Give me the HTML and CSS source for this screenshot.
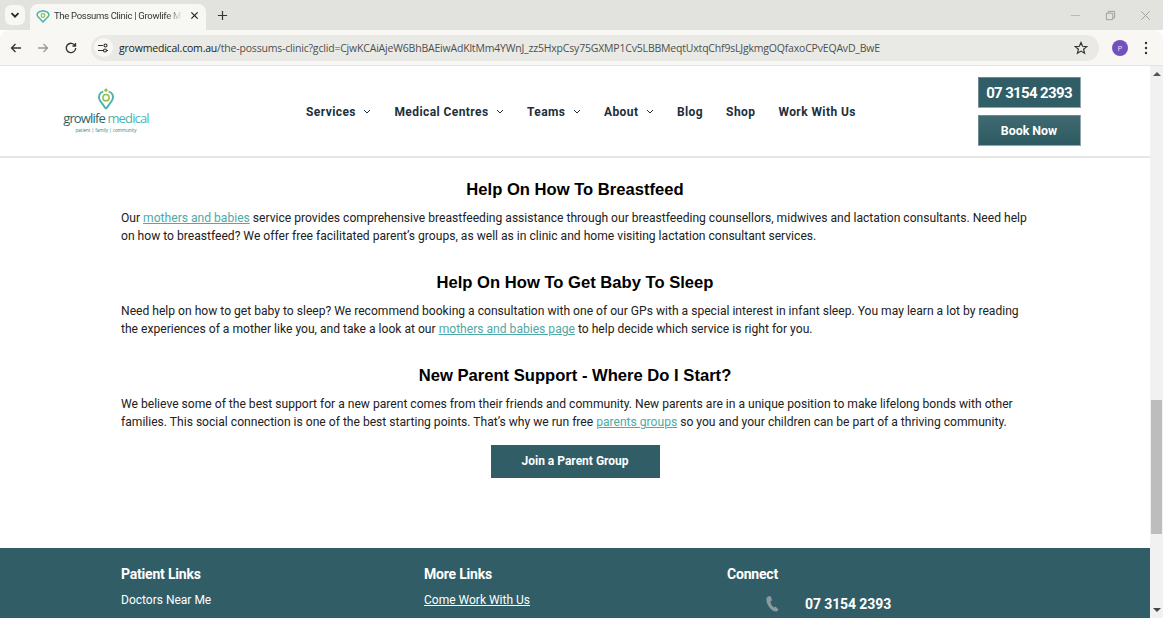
FILE: index.html
```html
<!DOCTYPE html>
<html lang="en">
<head>
<meta charset="utf-8">
<title>The Possums Clinic | Growlife Medical</title>
<link rel="stylesheet" href="styles.css">
</head>
<body>
<div class="window">
  <div class="tabstrip">
    <div class="tab-search"><svg class="ico12" viewBox="0 0 12 12"><path d="M2.500 4.200 6 7.700l3.500-3.500" fill="none" stroke="#222" stroke-width="1.700"/></svg></div>
    <div class="tab">
      <svg class="favicon" viewBox="0 0 14 14"><path d="M7 13 1.800 7.500C0 5.200 2.500 2 5 2.500L7 1.500l2 1C11.500 2 14 5.200 12.200 7.500Z" fill="none" stroke="#4fb3ad" stroke-width="1.500"/><circle cx="7" cy="6.500" r="1.800" fill="none" stroke="#8dbf45" stroke-width="1.200"/></svg>
      <span class="tab-title">The Possums Clinic | Growlife Medical</span>
      <svg class="tab-close" viewBox="0 0 10 10"><path d="M1.500 1.500l7 7m0-7-7 7" stroke="#222" stroke-width="1.300"/></svg>
    </div>
    <svg class="newtab" viewBox="0 0 12 12"><path d="M6 1v10M1 6h10" stroke="#333" stroke-width="1.300"/></svg>
    <div class="win-controls">
      <svg class="win-ico" viewBox="0 0 12 12"><path d="M1 6h10" stroke="#b5b5b2" stroke-width="1"/></svg>
      <svg class="win-ico" viewBox="0 0 12 12"><path d="M1.500 3.500h7v7h-7zM3.500 3.500v-2h7v7h-2" fill="none" stroke="#9a9a98" stroke-width="1"/></svg>
      <svg class="win-ico" viewBox="0 0 12 12"><path d="M1.500 1.500l9 9m0-9-9 9" stroke="#9a9a98" stroke-width="1"/></svg>
    </div>
  </div>
  <div class="toolbar">
    <svg class="nav-ico" viewBox="0 0 12 12"><path d="M11 6H1.500M5.500 2 1.500 6l4 4" fill="none" stroke="#333" stroke-width="1.300"/></svg>
    <svg class="nav-ico" viewBox="0 0 12 12"><path d="M1 6h9.500M6.500 2l4 4-4 4" fill="none" stroke="#999" stroke-width="1.300"/></svg>
    <svg class="nav-ico" viewBox="0 0 12 12"><path d="M10 3.500A4.700 4.700 0 1 0 10.700 6M10.500 1v3h-3" fill="none" stroke="#333" stroke-width="1.300"/></svg>
    <div class="omnibox">
      <span class="site-ico"><svg class="ico12" viewBox="0 0 12 12"><path d="M1 3.500h5M9.500 8.500h1.500M1 8.500h5" stroke="#333" stroke-width="1.100"/><circle cx="8.500" cy="3.500" r="1.500" fill="none" stroke="#333" stroke-width="1.100"/><circle cx="8" cy="8.500" r="1.500" fill="none" stroke="#333" stroke-width="1.100"/></svg></span>
      <span class="url"><span class="url-host">growmedical.com.au</span>/the-possums-clinic?gclid=CjwKCAiAjeW6BhBAEiwAdKltMm4YWnJ_zz5HxpCsy75GXMP1Cv5LBBMeqtUxtqChf9sLJgkmgOQfaxoCPvEQAvD_BwE</span>
      <svg class="star" viewBox="0 0 14 14"><path d="M7 1.500 8.600 5.300l4.100.3-3.100 2.700 1 4L7 10.100l-3.600 2.200 1-4L1.300 5.600l4.100-.3Z" fill="none" stroke="#333" stroke-width="1.200"/></svg>
    </div>
    <span class="avatar">P</span>
    <svg class="menu-ico" viewBox="0 0 4 14"><circle cx="2" cy="2" r="1.200"/><circle cx="2" cy="7" r="1.200"/><circle cx="2" cy="12" r="1.200"/></svg>
  </div>
  <div class="viewport">
    <div class="page">
      <header class="site-header">
        <a class="logo">
          <svg class="logo-mark" viewBox="0 0 20 24"><path d="M10 23 3.500 14C.5 9 3 4.500 7 3.800M10 23l6.500-9C19.500 9 17 4.500 13 3.800" fill="none" stroke="#4fb3ad" stroke-width="2.200"/><circle cx="10" cy="10.500" r="3.500" fill="none" stroke="#8dbf45" stroke-width="1.600"/><circle cx="10" cy="2.200" r="1.800" fill="#8dbf45"/></svg>
          <span class="logo-name"><span class="logo-grow">growlife</span> <span class="logo-med">medical</span></span>
          <span class="logo-tag">patient | family | community</span>
        </a>
        <nav class="nav">
          <a>Services<svg class="chev" viewBox="0 0 8 5"><path d="M1 1l3 3 3-3" fill="none" stroke="#1c2f3c" stroke-width="1"/></svg></a>
          <a>Medical Centres<svg class="chev" viewBox="0 0 8 5"><path d="M1 1l3 3 3-3" fill="none" stroke="#1c2f3c" stroke-width="1"/></svg></a>
          <a>Teams<svg class="chev" viewBox="0 0 8 5"><path d="M1 1l3 3 3-3" fill="none" stroke="#1c2f3c" stroke-width="1"/></svg></a>
          <a>About<svg class="chev" viewBox="0 0 8 5"><path d="M1 1l3 3 3-3" fill="none" stroke="#1c2f3c" stroke-width="1"/></svg></a>
          <a>Blog</a>
          <a>Shop</a>
          <a>Work With Us</a>
        </nav>
        <div class="cta">
          <a class="cta-phone">07 3154 2393</a>
          <a class="cta-book">Book Now</a>
        </div>
      </header>
      <main class="content">
        <section class="block">
          <h2>Help On How To Breastfeed</h2>
          <p>Our <a>mothers and babies</a> service provides comprehensive breastfeeding assistance through our breastfeeding counsellors, midwives and lactation consultants. Need help on how to breastfeed? We offer free facilitated parent’s groups, as well as in clinic and home visiting lactation consultant services.</p>
        </section>
        <section class="block">
          <h2>Help On How To Get Baby To Sleep</h2>
          <p>Need help on how to get baby to sleep? We recommend booking a consultation with one of our GPs with a special interest in infant sleep. You may learn a lot by reading the experiences of a mother like you, and take a look at our <a>mothers and babies page</a> to help decide which service is right for you.</p>
        </section>
        <section class="block">
          <h2>New Parent Support - Where Do I Start?</h2>
          <p>We believe some of the best support for a new parent comes from their friends and community. New parents are in a unique position to make lifelong bonds with other families. This social connection is one of the best starting points. That’s why we run free <a>parents groups</a> so you and your children can be part of a thriving community.</p>
        </section>
        <div class="join-row"><a class="join">Join a Parent Group</a></div>
      </main>
      <footer class="footer">
        <div class="foot-col">
          <h3>Patient Links</h3>
          <a class="foot-link">Doctors Near Me</a>
        </div>
        <div class="foot-col">
          <h3>More Links</h3>
          <a class="foot-link under">Come Work With Us</a>
        </div>
        <div class="foot-col">
          <h3>Connect</h3>
          <div class="foot-phone">
            <svg class="phone-ico" viewBox="0 0 16 18"><path d="M3 1.500 6 1l1.500 4.500L5.800 7c.3 2.500 1.700 5 3.700 6.300l1.700-1 3.300 3.200-2 2C6.500 18 1 10 1.500 3.500Z" fill="#8a9a9e"/></svg>
            <span>07 3154 2393</span>
          </div>
        </div>
      </footer>
    </div>
    <div class="scrollbar">
      <span class="arrow-up"></span>
      <span class="thumb"></span>
      <span class="arrow-down"></span>
    </div>
  </div>
</div>
</body>
</html>
```
FILE: styles.css
```css
* { box-sizing: border-box; }
html, body { margin: 0; padding: 0; background: #fff; overflow: hidden; }
body { width: 1165px; height: 620px; font-family: Roboto, "Liberation Sans", sans-serif; }
a { text-decoration: none; color: inherit; }
.window { width: 1163px; height: 618px; display: flex; flex-direction: column; overflow: hidden; }

.tabstrip { height: 30px; background: #e2e3df; display: flex; align-items: flex-end; padding-left: 5px; flex: none; }
.tab-search { width: 20px; height: 20px; margin-bottom: 5px; background: #f7f7f3; border-radius: 6px; display: flex; align-items: center; justify-content: center; }
.ico12 { width: 12px; height: 12px; display: block; }
.tab { width: 176px; height: 26px; margin-left: 5px; background: #f7f7f3; border-radius: 8px 8px 0 0; display: flex; align-items: center; padding: 0 7px 3px 6px; }
.favicon { width: 14px; height: 14px; flex: none; }
.tab-title { flex: 1; margin-left: 4px; font: 9.500px/14px Roboto, "Noto Sans", sans-serif; letter-spacing: -.3px; color: #333; white-space: nowrap; overflow: hidden; -webkit-mask-image: linear-gradient(90deg, #000 88%, transparent); mask-image: linear-gradient(90deg, #000 88%, transparent); }
.tab-close { width: 9px; height: 9px; flex: none; margin-left: 8px; }
.newtab { width: 11px; height: 11px; margin: 0 0 9px 11px; flex: none; }
.win-controls { margin-left: auto; display: flex; gap: 24px; padding-right: 12px; margin-bottom: 9px; }
.win-ico { width: 11px; height: 11px; display: block; }

.toolbar { height: 36px; background: #f8f7f3; border-bottom: 1px solid #e4e4e1; border-radius: 9px 9px 0 0; display: flex; align-items: center; padding: 0 12px 0 9.500px; flex: none; }
.nav-ico { width: 12px; height: 12px; margin-right: 15.500px; flex: none; }
.nav-ico:nth-child(3) { margin-right: 8px; }
.omnibox { width: 1008.500px; height: 26px; margin-left: 6px; border-radius: 13px; background: #e9eae5; display: flex; align-items: center; padding-left: 3px; flex: none; }
.site-ico { width: 19px; height: 19px; background: #f8f7f3; border-radius: 50%; display: flex; align-items: center; justify-content: center; flex: none; }
.url { margin-left: 6.500px; font: 10.500px/14px "Open Sans", "Noto Sans", sans-serif; letter-spacing: -.19px; color: #4d4f4f; white-space: nowrap; }
.url-host { color: #222; }
.star { width: 14px; height: 14px; margin-left: auto; margin-right: 11px; flex: none; }
.avatar { width: 16px; height: 16px; margin-left: 13px; border-radius: 50%; background: #7350bd; color: #e9e1f7; font: 8px/16px "Open Sans", sans-serif; text-align: center; flex: none; }
.menu-ico { width: 4px; height: 14px; margin-left: 16px; fill: #333; flex: none; }

.viewport { flex: 1; display: flex; min-height: 0; }
.page { flex: 1; min-width: 0; overflow: hidden; background: #fff; }

.site-header { height: 92px; border-bottom: 2px solid #e6e6e6; display: flex; align-items: center; padding: 0 69px 0 63px; }
.logo { width: 86px; display: flex; flex-direction: column; align-items: center; margin-top: -2px; color: #2f6d72; }
.logo-mark { width: 18px; height: 22px; display: block; }
.logo-name { font: 400 13px/15px "Open Sans", sans-serif; letter-spacing: -.85px; white-space: nowrap; margin-top: 1px; }
.logo-grow { color: #2f6366; }
.logo-med { color: #4fb3ad; }
.logo-tag { font: 4.500px/6px "Open Sans", sans-serif; color: #2f7d85; white-space: nowrap; margin-top: 1px; }
.nav { display: flex; gap: 23px; margin: 1px 0 0 157px; color: #1c2f3c; font-size: 12px; font-weight: 700; letter-spacing: .42px; line-height: 16px; }
.nav a { display: flex; align-items: center; white-space: nowrap; }
.chev { width: 8px; height: 5px; margin-left: 7.500px; }
.cta { margin-left: auto; width: 103px; display: flex; flex-direction: column; gap: 7px; margin-top: 1px; }
.cta-phone, .cta-book { display: block; height: 31px; color: #fff; text-align: center; font-weight: 700; background: #305d66; border: 1px solid #8fa8ad; border-width: 0 1px 1px 0; box-shadow: inset 1px 1px 0 #6d8a90; }
.cta-phone { font-size: 15px; letter-spacing: -.65px; line-height: 32px; }
.cta-book { font-size: 12.400px; line-height: 31px; background: linear-gradient(#416a72, #2d5a62); }

.content { padding: 21px 121px 0; color: #222; }
.block { margin-bottom: 26.400px; }
.block h2 { margin: 0 0 9px; text-align: center; font: 700 16.600px/21px "Liberation Sans", Arial, sans-serif; color: #000; }
.block p { margin: 0; font-size: 12.100px; line-height: 18.300px; color: #212121; }
.block p a { color: #4fa9a6; text-decoration: underline; }
.block:nth-child(3) { margin-bottom: 13.400px; }
.join-row { display: flex; justify-content: center; }
.join { width: 169px; height: 33px; background: #305d66; color: #fff; font-size: 12px; font-weight: 700; line-height: 33px; text-align: center; }

.footer { margin: 70px 0 0; height: 71px; background: #315d66; color: #fff; padding: 18px 0 0 121px; display: flex; }
.foot-col { width: 303px; }
.foot-col h3 { margin: 0 0 9px; font-size: 14px; line-height: 17px; font-weight: 700; letter-spacing: -.2px; }
.foot-link { display: block; font-size: 12px; line-height: 16px; }
.under { text-decoration: underline; }
.foot-phone { display: flex; align-items: center; margin: 10px 0 0 37px; font-size: 14px; letter-spacing: -.1px; font-weight: 700; line-height: 22px; gap: 24px; }
.phone-ico { width: 17px; height: 17px; flex: none; }

.scrollbar { width: 13px; background: #f1f1f1; display: flex; flex-direction: column; align-items: center; flex: none; }
.arrow-up { width: 0; height: 0; margin-top: 6px; border: 4px solid transparent; border-top: 0; border-bottom: 4px solid #555; }
.thumb { width: 11px; height: 134px; margin-top: 324px; background: #bdbdbd; }
.arrow-down { width: 0; height: 0; margin-top: auto; margin-bottom: 6px; border: 4px solid transparent; border-bottom: 0; border-top: 4px solid #444; }
```
